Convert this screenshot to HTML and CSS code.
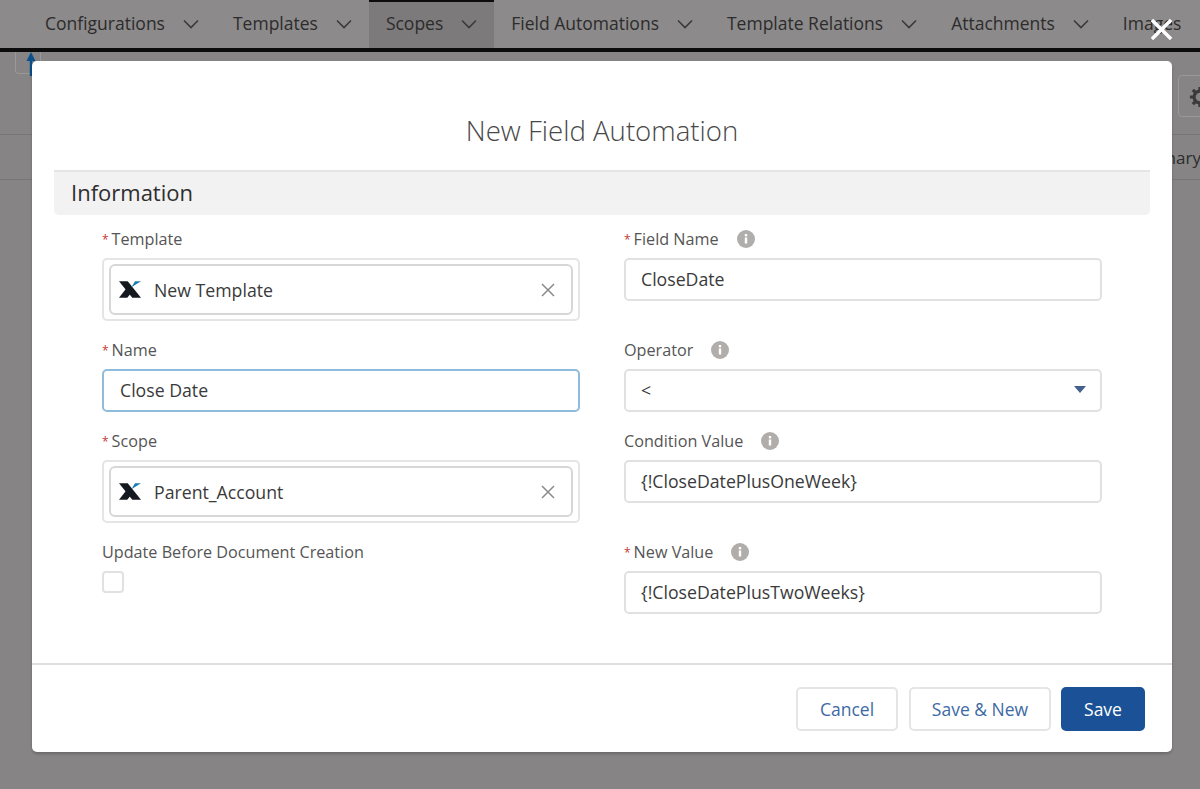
FILE: index.html
```html
<!DOCTYPE html>
<html lang="en">
<head>
    <meta charset="UTF-8">
    <meta name="viewport" content="width=device-width, initial-scale=1.0">
    <title>New Field Automation</title>
    <link rel="stylesheet" href="styles.css">
</head>
<body>

    <nav class="tabs">
        <a class="tab">Configurations <svg class="chev" viewBox="0 0 16 10"><path d="M1 1.5 8 8.5 15 1.5"/></svg></a>
        <a class="tab">Templates <svg class="chev" viewBox="0 0 16 10"><path d="M1 1.5 8 8.5 15 1.5"/></svg></a>
        <a class="tab active">Scopes <svg class="chev" viewBox="0 0 16 10"><path d="M1 1.5 8 8.5 15 1.5"/></svg></a>
        <a class="tab">Field Automations <svg class="chev" viewBox="0 0 16 10"><path d="M1 1.5 8 8.5 15 1.5"/></svg></a>
        <a class="tab">Template Relations <svg class="chev" viewBox="0 0 16 10"><path d="M1 1.5 8 8.5 15 1.5"/></svg></a>
        <a class="tab">Attachments <svg class="chev" viewBox="0 0 16 10"><path d="M1 1.5 8 8.5 15 1.5"/></svg></a>
        <a class="tab">Images</a>
    </nav>

    <div class="actions-row">
        <div class="pin-btn">
            <svg viewBox="0 0 10 24" class="pin"><path d="M5 0 9.5 9H6.2V24H3.8V9H.5Z"/></svg>
        </div>
        <div class="gear-btn">
            <svg viewBox="0 0 24 24" class="gear"><circle cx="12" cy="12" r="6.5"/><path d="M12 1v4M12 19v4M1 12h4M19 12h4M4.2 4.2 7 7M17 17l2.8 2.8M4.2 19.8 7 17M17 7l2.800-2.800"/></svg>
        </div>
    </div>
    <div class="summary-row"><span>Summary</span></div>

    <svg class="close" viewBox="0 0 24 24"><path d="M2 2 22 22M22 2 2 22"/></svg>

    <div class="modal">
        <h2 class="modal-title">New Field Automation</h2>
        <h3 class="section-title">Information</h3>

        <div class="form-grid">
            <div class="field">
                <label><span class="req">*</span>Template</label>
                <div class="lookup">
                    <div class="pill">
                        <svg class="logo" viewBox="0 0 24 20"><path class="logo-dark" d="M0 1H9.500L24 19H14.500Z"/><path class="logo-dark" d="M0 19H9L13.500 13.500 8.500 8Z"/><path class="logo-blue" d="M13.500 7.500 17.500 1H24Z"/></svg>
                        <span class="pill-text">New Template</span>
                        <svg class="clear" viewBox="0 0 14 14"><path d="M1 1 13 13M13 1 1 13"/></svg>
                    </div>
                </div>
            </div>
            <div class="field">
                <label><span class="req">*</span>Field Name <svg class="info" viewBox="0 0 18 18"><circle cx="9" cy="9" r="9"/><rect x="7.800" y="4" width="2.400" height="2.400"/><rect x="7.800" y="7.500" width="2.400" height="6"/></svg></label>
                <div class="input">CloseDate</div>
            </div>

            <div class="field">
                <label><span class="req">*</span>Name</label>
                <div class="input focused">Close Date</div>
            </div>
            <div class="field">
                <label>Operator <svg class="info" viewBox="0 0 18 18"><circle cx="9" cy="9" r="9"/><rect x="7.800" y="4" width="2.400" height="2.400"/><rect x="7.800" y="7.500" width="2.400" height="6"/></svg></label>
                <div class="input select">&lt;<span class="caret"></span></div>
            </div>

            <div class="field">
                <label><span class="req">*</span>Scope</label>
                <div class="lookup">
                    <div class="pill">
                        <svg class="logo" viewBox="0 0 24 20"><path class="logo-dark" d="M0 1H9.500L24 19H14.500Z"/><path class="logo-dark" d="M0 19H9L13.500 13.500 8.500 8Z"/><path class="logo-blue" d="M13.500 7.500 17.500 1H24Z"/></svg>
                        <span class="pill-text">Parent_Account</span>
                        <svg class="clear" viewBox="0 0 14 14"><path d="M1 1 13 13M13 1 1 13"/></svg>
                    </div>
                </div>
            </div>
            <div class="field">
                <label>Condition Value <svg class="info" viewBox="0 0 18 18"><circle cx="9" cy="9" r="9"/><rect x="7.800" y="4" width="2.400" height="2.400"/><rect x="7.800" y="7.500" width="2.400" height="6"/></svg></label>
                <div class="input">{!CloseDatePlusOneWeek}</div>
            </div>

            <div class="field">
                <label>Update Before Document Creation</label>
                <div class="checkbox"></div>
            </div>
            <div class="field">
                <label><span class="req">*</span>New Value <svg class="info" viewBox="0 0 18 18"><circle cx="9" cy="9" r="9"/><rect x="7.800" y="4" width="2.400" height="2.400"/><rect x="7.800" y="7.500" width="2.400" height="6"/></svg></label>
                <div class="input">{!CloseDatePlusTwoWeeks}</div>
            </div>
        </div>

        <div class="modal-footer">
            <button class="btn btn-cancel">Cancel</button>
            <button class="btn btn-new">Save &amp; New</button>
            <button class="btn btn-save">Save</button>
        </div>
    </div>

</body>
</html>
```

FILE: styles.css
```css
* {
    box-sizing: border-box;
}

body {
    background-color: #868484;
    color: #3a3a3a;
    font-family: "Open Sans", Arial, sans-serif;
    margin: 0;
    padding: 0;
    height: 100vh;
    overflow: hidden;
}

.tabs {
    display: flex;
    height: 52px;
    padding-left: 28px;
    background-color: #8c8a8a;
    border-bottom: 4px solid #0c0c0c;
    white-space: nowrap;
    overflow: hidden;
}

.tab {
    display: flex;
    align-items: center;
    gap: 18px;
    padding: 0 17px 2px;
    font-size: 17.5px;
    color: #2c2c2c;
}

.tab.active {
    background-color: #7c7a7a;
    border-top: 2px solid #0c0c0c;
    padding-bottom: 4px;
}

.chev {
    width: 16px;
    height: 10px;
    margin-top: 2px;
}

.chev path {
    fill: none;
    stroke: #3a3a3a;
    stroke-width: 1.6;
}

.actions-row {
    display: flex;
    justify-content: space-between;
    height: 83px;
    border-bottom: 1px solid #777575;
}

.pin-btn {
    width: 26px;
    height: 22px;
    margin-left: 15px;
    border: 1px solid #9a9898;
    border-top: none;
    border-radius: 0 0 4px 4px;
    text-align: center;
}

.pin {
    display: block;
    width: 10px;
    height: 24px;
    margin-left: 10px;
}

.pin path {
    fill: #0a4f8c;
}

.gear-btn {
    width: 40px;
    height: 42px;
    margin-top: 23px;
    margin-right: -18px;
    border: 1px solid #9a9898;
    border-radius: 4px;
    padding: 10px 0 0 10px;
}

.gear {
    display: block;
    width: 22px;
    height: 22px;
}

.gear circle,
.gear path {
    fill: none;
    stroke: #3a3a3a;
    stroke-width: 3.5;
}

.summary-row {
    height: 45px;
    display: flex;
    align-items: center;
    justify-content: flex-end;
    margin-right: -1px;
    font-size: 17px;
    color: #2c2c2c;
    border-bottom: 1px solid #777575;
}

.close {
    position: absolute;
    top: 18px;
    left: 1150px;
    width: 23px;
    height: 23px;
    z-index: 2;
}

.close path {
    fill: none;
    stroke: #fff;
    stroke-width: 3.6;
}

.modal {
    position: absolute;
    top: 61px;
    left: 32px;
    width: 1140px;
    height: 691px;
    background-color: white;
    border-radius: 5px;
    box-shadow: 0 2px 3px rgba(0, 0, 0, 0.2);
    display: flex;
    flex-direction: column;
}

.modal-title {
    margin: 0;
    padding-top: 50px;
    height: 109px;
    text-align: center;
    font-size: 27.6px;
    line-height: 38px;
    font-weight: 300;
    color: #484848;
}

.section-title {
    margin: 0 22px 0;
    height: 45px;
    padding-left: 17px;
    font-size: 22px;
    line-height: 41px;
    font-weight: 400;
    color: #2e2e2e;
    background-color: #f3f2f2;
    border-top: 2px solid #e6e5e5;
    border-radius: 0 0 5px 5px;
}

.form-grid {
    display: grid;
    grid-template-columns: 478px 478px;
    column-gap: 44px;
    row-gap: 19px;
    padding: 14px 70px 0;
    flex: 1;
    align-content: start;
}

.field label {
    display: flex;
    align-items: center;
    height: 20px;
    margin-bottom: 9px;
    font-size: 16.2px;
    color: #555;
}

.req {
    color: #c23934;
    margin-right: 3px;
    font-size: 12px;
}

.info {
    width: 18px;
    height: 18px;
    margin-left: 18px;
}

.info circle {
    fill: #b0adab;
}

.info rect {
    fill: white;
}

.input {
    display: flex;
    align-items: center;
    height: 43px;
    padding: 0 15px 2px;
    font-size: 17.7px;
    color: #3a3a3a;
    border: 2px solid #e2e1e0;
    border-radius: 5px;
}

.input.focused {
    padding-left: 16px;
    border-color: #8fbcdc;
}

.input.select {
    justify-content: space-between;
    padding-right: 14px;
}

.caret {
    width: 0;
    height: 0;
    border-left: 6px solid transparent;
    border-right: 6px solid transparent;
    border-top: 7px solid #44608c;
}

.lookup {
    height: 63px;
    padding: 4px 5px;
    border: 2px solid #e6e5e5;
    border-radius: 5px;
}

.pill {
    display: flex;
    align-items: center;
    height: 100%;
    padding: 0 16px 0 8px;
    border: 2px solid #d8d7d6;
    border-radius: 6px;
}

.logo {
    width: 22px;
    height: 19px;
    flex-shrink: 0;
}

.logo-dark {
    fill: #14191f;
}

.logo-blue {
    fill: #1a7cb0;
}

.pill-text {
    flex: 1;
    margin-left: 13px;
    font-size: 17.7px;
    color: #3a3a3a;
}

.clear {
    width: 14px;
    height: 14px;
}

.clear path {
    fill: none;
    stroke: #8a8a8a;
    stroke-width: 1.500;
}

.checkbox {
    width: 22px;
    height: 22px;
    border: 2px solid #e2e1e0;
    border-radius: 4px;
}

.modal-footer {
    display: flex;
    justify-content: flex-end;
    gap: 10px;
    height: 89px;
    padding: 22px 27px 0 0;
    border-top: 2px solid #dfdede;
}

.btn {
    height: 44px;
    padding: 0 0 1px;
    font-family: inherit;
    font-size: 17.5px;
    background-color: white;
    color: #3d6aa5;
    border: 2px solid #e6e5e5;
    border-radius: 5px;
}

.btn-cancel {
    width: 102px;
    margin-right: 1px;
}

.btn-new {
    width: 142px;
}

.btn-save {
    width: 84px;
    background-color: #1b5297;
    border-color: #1b5297;
    color: white;
}
```
